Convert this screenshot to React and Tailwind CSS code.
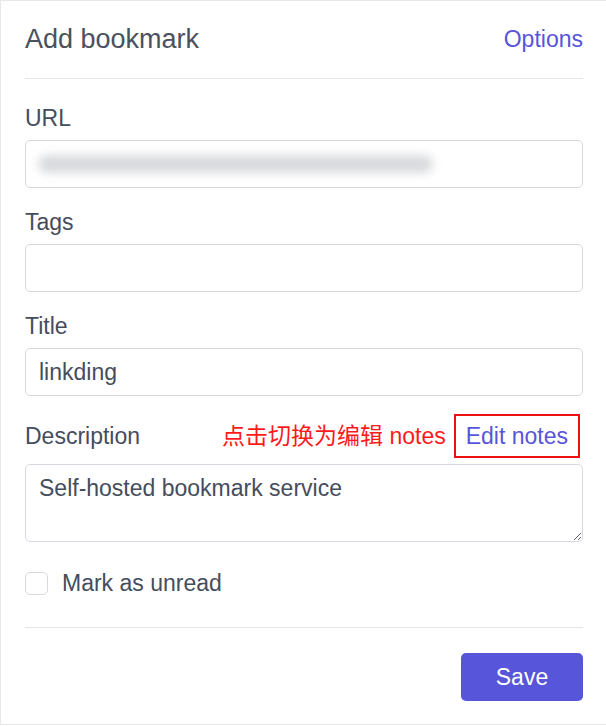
import { useState } from 'react';

const font = { fontFamily: '"Liberation Sans", "Noto Sans CJK SC", sans-serif' };

function Field({ label, children }) {
  return (
    <div className="mt-[18px]">
      <div className="h-[32px] leading-[32px] text-[23px] text-[#454d5d]">{label}</div>
      <div className="mt-[6px]">{children}</div>
    </div>
  );
}

export default function App() {
  const [title, setTitle] = useState('linkding');
  const [tags, setTags] = useState('');
  const [unread, setUnread] = useState(false);

  return (
    <div
      style={font}
      className="w-[606px] h-[725px] bg-white border-t border-l border-b border-[#e8e8ea] pl-[24px] pr-[23px] text-[#454d5d]"
    >
      {/* Header */}
      <div className="h-[78px] flex items-center justify-between border-b border-[#e4e6ea]">
        <h1 className="text-[27px] text-[#4a5160] font-normal">Add bookmark</h1>
        <a className="text-[23px] text-[#5755d9] cursor-pointer">Options</a>
      </div>

      <div className="pt-[5px]">
        <Field label="URL">
          <div className="h-[48px] w-full rounded-[5px] border border-[#d6dae0] flex items-center px-[12px] overflow-hidden">
            <div className="h-[18px] w-[395px] rounded-full bg-[#d8dadd] blur-[5px]"></div>
          </div>
        </Field>

        <Field label="Tags">
          <input
            value={tags}
            onChange={e => setTags(e.target.value)}
            className="h-[48px] w-full rounded-[5px] border border-[#d6dae0] px-[13px] text-[23px] outline-none"
          />
        </Field>

        <Field label="Title">
          <input
            value={title}
            onChange={e => setTitle(e.target.value)}
            className="h-[48px] w-full rounded-[5px] border border-[#d6dae0] px-[13px] text-[23px] text-[#454d5d] outline-none"
          />
        </Field>

        {/* Description */}
        <div className="mt-[18px]">
          <div className="h-[44px] flex items-center justify-between">
            <span className="text-[23px]">Description</span>
            <div className="flex items-center gap-[8px]">
              <span className="text-[23px] text-[#ff1a1a]">点击切换为编辑 notes</span>
              <div className="h-[44px] border-2 border-[#ee1111] flex items-center px-[10px] mr-[3px]">
                <a className="text-[23px] text-[#5755d9] cursor-pointer">Edit notes</a>
              </div>
            </div>
          </div>
          <textarea
            readOnly
            defaultValue="Self-hosted bookmark service"
            className="mt-[6px] block h-[78px] w-full rounded-[5px] border border-[#d6dae0] px-[13px] py-[8px] text-[23px] leading-[30px] text-[#454d5d] outline-none"
          />
        </div>

        {/* Unread */}
        <label className="mt-[30px] flex items-center gap-[14px] h-[23px] cursor-pointer">
          <input
            type="checkbox"
            checked={unread}
            onChange={() => setUnread(prev => !prev)}
            className="appearance-none w-[23px] h-[23px] rounded-[5px] border border-[#d6dae0] checked:bg-[#5755d9]"
          />
          <span className="text-[23px]">Mark as unread</span>
        </label>

        <div className="mt-[32px] border-t border-[#e4e6ea]"></div>

        <div className="mt-[25px] flex justify-end">
          <button className="w-[122px] h-[48px] rounded-[5px] bg-[#5755d9] text-white text-[23px]">
            Save
          </button>
        </div>
      </div>
    </div>
  );
}
